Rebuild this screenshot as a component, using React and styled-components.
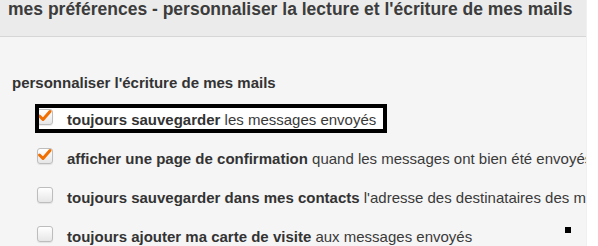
import React from "react";
import styled, { createGlobalStyle, css } from "styled-components";

const Global = createGlobalStyle`
  html, body { margin: 0; padding: 0; background: #ffffff; }
  body { font-family: "Liberation Sans", Arial, sans-serif; }
`;

const Page = styled.div`
  width: 598px;
  height: 246px;
  overflow: hidden;
  background: #ffffff;
`;

const Panel = styled.div`
  position: relative;
  width: 586px;
  height: 246px;
  overflow: hidden;
  background: #f5f5f5;
  border-right: 1px solid #f0f0f0;
`;

const Header = styled.h1`
  margin: 0;
  height: 36px;
  padding: 0 8px;
  box-sizing: content-box;
  background: #ebebeb;
  border-bottom: 1px solid #d6d6d6;
  font-size: 17.5px;
  line-height: 18px;
  font-weight: bold;
  color: #3c3c3c;
  white-space: nowrap;
`;

const Section = styled.section`
  padding: 37px 0 0 12px;
`;

const SectionTitle = styled.h2`
  margin: 0;
  font-size: 15px;
  line-height: 18px;
  font-weight: bold;
  color: #333333;
  white-space: nowrap;
`;

const List = styled.div`
  margin-top: 8px;
  margin-left: 25px;
  display: flex;
  flex-direction: column;
`;

const Row = styled.label`
  position: relative;
  display: flex;
  align-items: center;
  height: 39px;
  gap: 14px;
  white-space: nowrap;

  ${(p) =>
    p.$highlight &&
    css`
      &::before,
      &::after {
        content: "";
        position: absolute;
        left: -2px;
        top: 4px;
        width: 352px;
        height: 29px;
        box-sizing: border-box;
      }
      &::before {
        background: #ffffff;
      }
      &::after {
        border: 4px solid #000000;
        z-index: 2;
      }
    `}
`;

const Box = styled.span`
  position: relative;
  flex: none;
  width: 16px;
  height: 16px;
  margin-bottom: 6px;
  box-sizing: border-box;
  border: 1px solid #bdbdbd;
  border-radius: 3px;
  background: linear-gradient(#ffffff, #e6e6e6);
  box-shadow: 0 1px 1px rgba(0, 0, 0, 0.08);
`;

const Check = styled.svg`
  position: absolute;
  left: -2px;
  top: -2px;
  width: 18px;
  height: 18px;
  overflow: visible;
`;

const Label = styled.span`
  position: relative;
  font-size: 15px;
  line-height: 18px;
  color: #3a3a3a;
`;

const Strong = styled.b`
  font-weight: bold;
  color: #333333;
`;

const Marker = styled.span`
  position: absolute;
  left: 565px;
  top: 227px;
  width: 6px;
  height: 6px;
  background: #000000;
`;

const Checkbox = ({ checked }) => (
  <Box>
    {checked && (
      <Check viewBox="0 0 18 18">
        <path
          d="M3.5 8 L7 11.5 L14 3.5"
          fill="none"
          stroke="#f16e00"
          strokeWidth="3"
          strokeLinecap="round"
          strokeLinejoin="round"
        />
      </Check>
    )}
  </Box>
);

const items = [
  { bold: "toujours sauvegarder", rest: "les messages envoyés", checked: true, highlight: true },
  { bold: "afficher une page de confirmation", rest: "quand les messages ont bien été envoyés", checked: true },
  { bold: "toujours sauvegarder dans mes contacts", rest: "l'adresse des destinataires des messages", checked: false },
  { bold: "toujours ajouter ma carte de visite", rest: "aux messages envoyés", checked: false },
];

export default function App() {
  return (
    <Page>
      <Global />
      <Panel>
        <Header>mes préférences - personnaliser la lecture et l'écriture de mes mails</Header>
        <Section>
          <SectionTitle>personnaliser l'écriture de mes mails</SectionTitle>
          <List>
            {items.map((it, i) => (
              <Row key={i} $highlight={it.highlight}>
                <Checkbox checked={it.checked} />
                <Label>
                  <Strong>{it.bold}</Strong> {it.rest}
                </Label>
              </Row>
            ))}
          </List>
        </Section>
        <Marker />
      </Panel>
    </Page>
  );
}
